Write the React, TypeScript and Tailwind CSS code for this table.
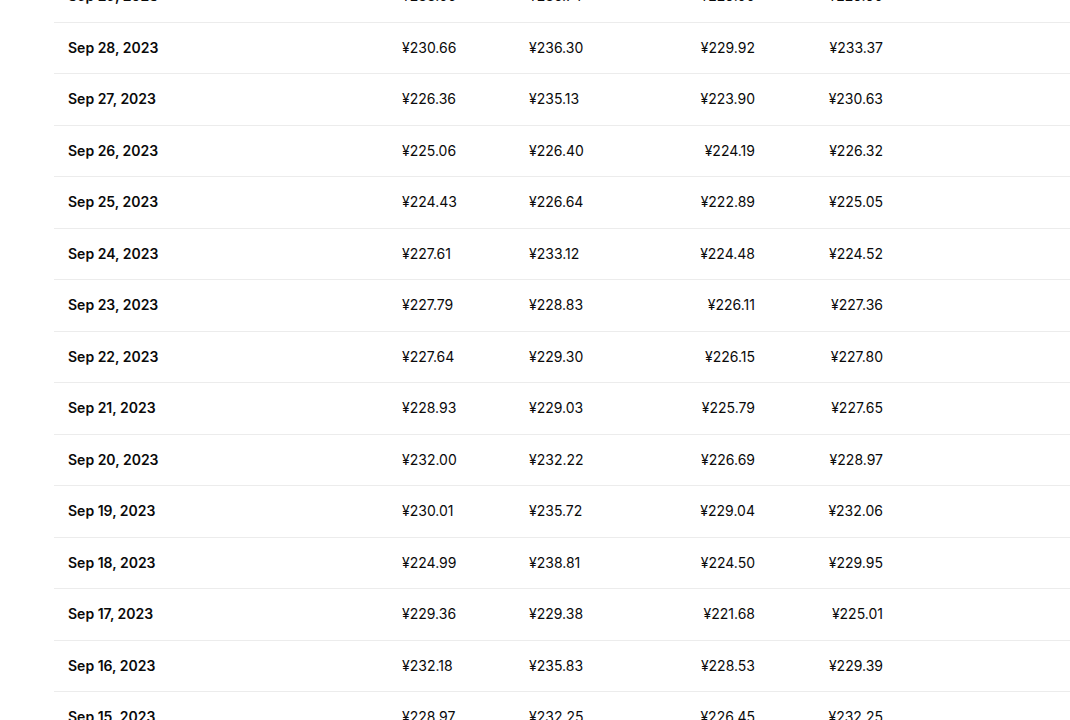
import React from "react";

const rows: [string, string, string, string, string][] = [
  ["Sep 29, 2023", "¥233.00", "¥235.74", "¥229.00", "¥229.90"],
  ["Sep 28, 2023", "¥230.66", "¥236.30", "¥229.92", "¥233.37"],
  ["Sep 27, 2023", "¥226.36", "¥235.13", "¥223.90", "¥230.63"],
  ["Sep 26, 2023", "¥225.06", "¥226.40", "¥224.19", "¥226.32"],
  ["Sep 25, 2023", "¥224.43", "¥226.64", "¥222.89", "¥225.05"],
  ["Sep 24, 2023", "¥227.61", "¥233.12", "¥224.48", "¥224.52"],
  ["Sep 23, 2023", "¥227.79", "¥228.83", "¥226.11", "¥227.36"],
  ["Sep 22, 2023", "¥227.64", "¥229.30", "¥226.15", "¥227.80"],
  ["Sep 21, 2023", "¥228.93", "¥229.03", "¥225.79", "¥227.65"],
  ["Sep 20, 2023", "¥232.00", "¥232.22", "¥226.69", "¥228.97"],
  ["Sep 19, 2023", "¥230.01", "¥235.72", "¥229.04", "¥232.06"],
  ["Sep 18, 2023", "¥224.99", "¥238.81", "¥224.50", "¥229.95"],
  ["Sep 17, 2023", "¥229.36", "¥229.38", "¥221.68", "¥225.01"],
  ["Sep 16, 2023", "¥232.18", "¥235.83", "¥228.53", "¥229.39"],
  ["Sep 15, 2023", "¥228.97", "¥232.25", "¥226.45", "¥232.25"],
];

export default function App() {
  return (
    <div
      className="w-[1070px] h-[720px] overflow-hidden bg-white text-[#0a0a0a]"
      style={{ fontFamily: "Inter, 'Noto Sans', sans-serif" }}
    >
      <div className="ml-[54px] mt-[-29px] w-[1100px]">
        {rows.map((r) => (
          <div
            key={r[0]}
            className="flex items-center h-[51.5px] border-b border-[#ececec] text-[14px] leading-5"
          >
            <div className="w-[348px] pl-[14px] font-semibold">{r[0]}</div>
            <div className="w-[127px]">{r[1]}</div>
            <div className="w-[100px]">{r[2]}</div>
            <div className="w-[126px] text-right">{r[3]}</div>
            <div className="w-[128px] text-right">{r[4]}</div>
          </div>
        ))}
      </div>
    </div>
  );
}
